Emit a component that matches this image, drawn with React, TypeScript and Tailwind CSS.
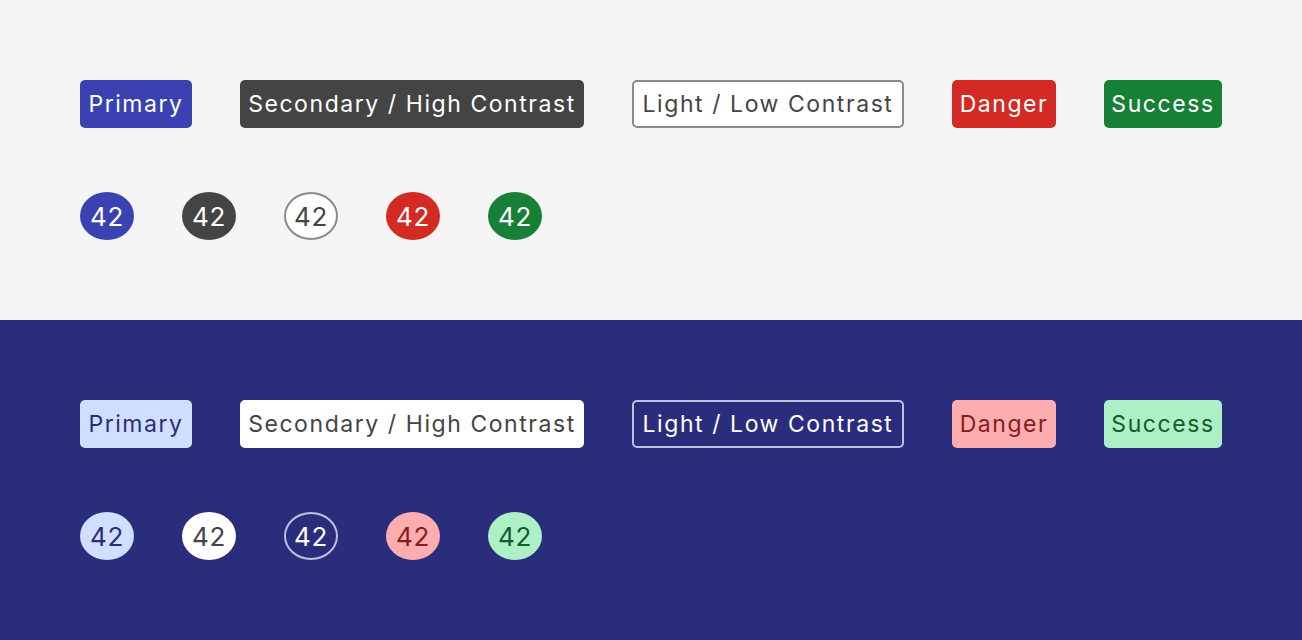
const labels = [
  { text: "Primary", w: "w-[112px]" },
  { text: "Secondary / High Contrast", w: "w-[344px]" },
  { text: "Light / Low Contrast", w: "w-[272px]" },
  { text: "Danger", w: "w-[104px]" },
  { text: "Success", w: "w-[118px]" },
];

const lightStyles = [
  "bg-[#3a41b1] text-white",
  "bg-[#444444] text-white",
  "bg-white text-[#444444] border-2 border-[#8a8a8a]",
  "bg-[#d42a24] text-white",
  "bg-[#168036] text-white",
];

const darkStyles = [
  "bg-[#d0deff] text-[#2a2d7c]",
  "bg-white text-[#444444]",
  "bg-transparent text-white border-2 border-[#bfc0de]",
  "bg-[#fbadb0] text-[#8b1a1a]",
  "bg-[#adf0c5] text-[#145c2b]",
];

function Section({ bg, styles }: { bg: string; styles: string[] }) {
  return (
    <div className={`${bg} h-[320px] px-20 pt-20 flex flex-col gap-16`}>
      <div className="flex gap-12">
        {labels.map((l, i) => (
          <span
            key={l.text}
            className={`${l.w} ${styles[i]} h-12 rounded-[5px] flex items-center justify-center text-[23px] tracking-[0.068em] whitespace-nowrap`}
          >
            {l.text}
          </span>
        ))}
      </div>
      <div className="flex gap-12">
        {styles.map((s, i) => (
          <span
            key={i}
            className={`${s} w-[54px] h-12 rounded-[50%] flex items-center justify-center text-[26px] tracking-[0.03em]`}
          >
            42
          </span>
        ))}
      </div>
    </div>
  );
}

export default function App() {
  return (
    <div className="w-[1302px] h-[640px] font-['Inter','Liberation_Sans',sans-serif]">
      <Section bg="bg-[#f5f5f5]" styles={lightStyles} />
      <Section bg="bg-[#2a2d7c]" styles={darkStyles} />
    </div>
  );
}
